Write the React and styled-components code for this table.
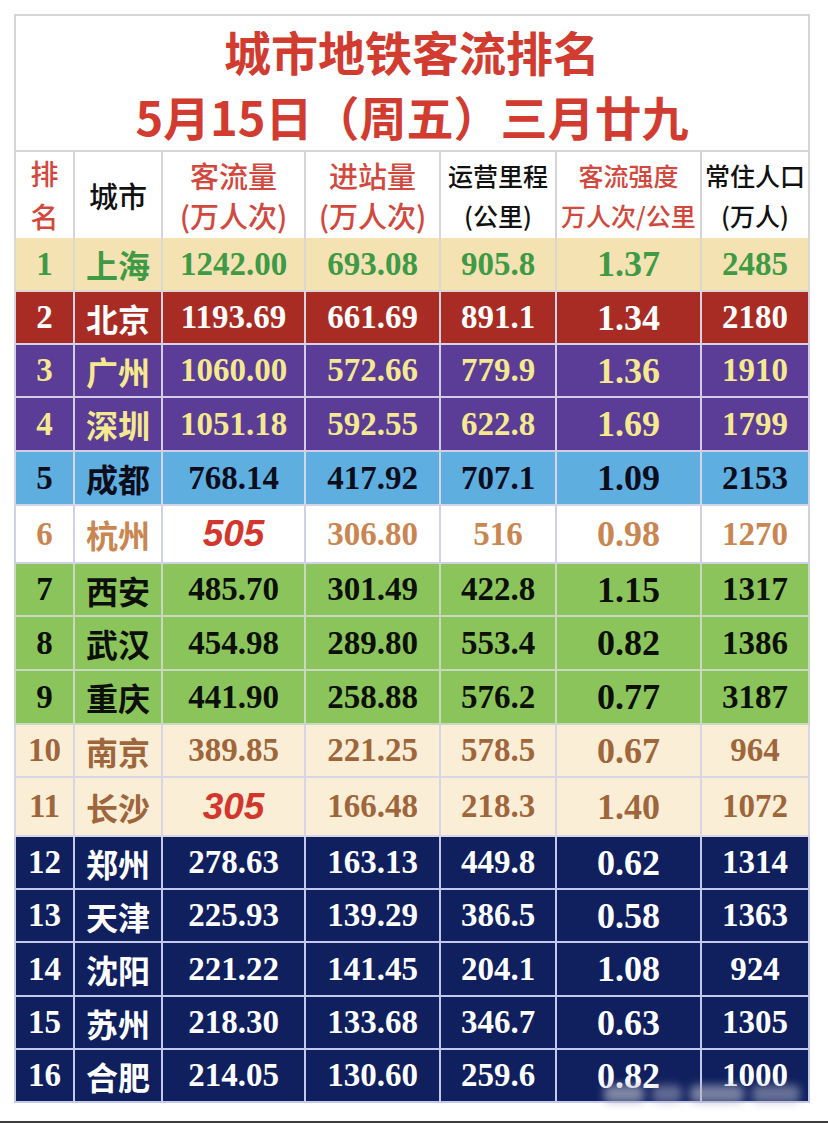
import styled, { createGlobalStyle } from "styled-components";

const GlobalStyle = createGlobalStyle`
  html, body {
    margin: 0;
    padding: 0;
    background: #ffffff;
  }
  body {
    width: 828px;
    height: 1123px;
    overflow: hidden;
    font-family: "Noto Sans CJK SC", "Liberation Sans", sans-serif;
  }
`;

const COLS = "57px 86px 141px 133px 114px 143px 106px";

// 每组行的配色
const themes = {
  gold: { bg: "#f5e2b3", fg: "#3f9a46", line: "#dcd8d0" },
  red: { bg: "#a82c23", fg: "#ffffff", line: "#d9d2e6" },
  purple: { bg: "#5b3c97", fg: "#f5e98f", line: "#d3cde8" },
  blue: { bg: "#5eaee0", fg: "#0a0d1c", line: "#d3d6ea" },
  white: { bg: "#ffffff", fg: "#c98651", line: "#cfd1e4" },
  green: { bg: "#8bc45b", fg: "#0c1009", line: "#c9d9c0" },
  cream: { bg: "#fbeed7", fg: "#9f663b", line: "#d8d6e4" },
  navy: { bg: "#10205f", fg: "#ffffff", line: "#c4c8ea" },
};

const rows = [
  { t: "gold", h: 54, d: ["1", "上海", "1242.00", "693.08", "905.8", "1.37", "2485"] },
  { t: "red", h: 53, d: ["2", "北京", "1193.69", "661.69", "891.1", "1.34", "2180"] },
  { t: "purple", h: 53, d: ["3", "广州", "1060.00", "572.66", "779.9", "1.36", "1910"] },
  { t: "purple", h: 54, d: ["4", "深圳", "1051.18", "592.55", "622.8", "1.69", "1799"] },
  { t: "blue", h: 54, d: ["5", "成都", "768.14", "417.92", "707.1", "1.09", "2153"] },
  { t: "white", h: 58, d: ["6", "杭州", "505", "306.80", "516", "0.98", "1270"], accent: true },
  { t: "green", h: 53, d: ["7", "西安", "485.70", "301.49", "422.8", "1.15", "1317"] },
  { t: "green", h: 54, d: ["8", "武汉", "454.98", "289.80", "553.4", "0.82", "1386"] },
  { t: "green", h: 54, d: ["9", "重庆", "441.90", "258.88", "576.2", "0.77", "3187"] },
  { t: "cream", h: 53, d: ["10", "南京", "389.85", "221.25", "578.5", "0.67", "964"] },
  { t: "cream", h: 59, d: ["11", "长沙", "305", "166.48", "218.3", "1.40", "1072"], accent: true },
  { t: "navy", h: 53, d: ["12", "郑州", "278.63", "163.13", "449.8", "0.62", "1314"] },
  { t: "navy", h: 53, d: ["13", "天津", "225.93", "139.29", "386.5", "0.58", "1363"] },
  { t: "navy", h: 54, d: ["14", "沈阳", "221.22", "141.45", "204.1", "1.08", "924"] },
  { t: "navy", h: 53, d: ["15", "苏州", "218.30", "133.68", "346.7", "0.63", "1305"] },
  { t: "navy", h: 53, d: ["16", "合肥", "214.05", "130.60", "259.6", "0.82", "1000"] },
];

const headers = [
  { lines: ["排", "名"], size: 28, red: true, lh: 43 },
  { lines: ["城市"], size: 29 },
  { lines: ["客流量", "(万人次)"], size: 29, red: true, lh: 40 },
  { lines: ["进站量", "(万人次)"], size: 29, red: true, lh: 40 },
  { lines: ["运营里程", "(公里)"], size: 25, lh: 40 },
  { lines: ["客流强度", "万人次/公里"], size: 25, red: true, lh: 40 },
  { lines: ["常住人口", "(万人)"], size: 25, lh: 40 },
];

// 水印的模糊色块
const smudges = [
  { x: 0, w: 40, o: 0.7 },
  { x: 48, w: 30, o: 0.5 },
  { x: 86, w: 54, o: 0.65 },
  { x: 148, w: 48, o: 0.55 },
];

const Page = styled.div`
  display: flex;
  flex-direction: column;
  padding: 14px 0 0 14px;
  height: 1123px;
  box-sizing: border-box;
`;

const Sheet = styled.div`
  position: relative;
  width: 796px;
  display: flex;
  flex-direction: column;
`;

const TitleBox = styled.div`
  height: 138px;
  box-sizing: border-box;
  border: 2px solid #d6d6d6;
  display: flex;
  flex-direction: column;
  align-items: center;
  justify-content: center;
  background: #ffffff;
`;

const TitleLine = styled.div`
  font-family: "Noto Sans CJK SC", sans-serif;
  font-weight: 700;
  font-size: 47px;
  line-height: 65px;
  color: #d23b30;
  white-space: nowrap;
`;

const Row = styled.div`
  display: grid;
  grid-template-columns: ${COLS};
  column-gap: 2px;
  height: ${(p) => p.$h}px;
  box-sizing: border-box;
  background: ${(p) => p.$line};
  border: 2px solid ${(p) => p.$line};
  border-top: none;
`;

const HeadCell = styled.div`
  background: #ffffff;
  display: flex;
  flex-direction: column;
  align-items: center;
  justify-content: center;
  font-family: "Noto Sans CJK SC", sans-serif;
  font-weight: 500;
  font-size: ${(p) => p.$size}px;
  line-height: ${(p) => p.$lh}px;
  color: ${(p) => (p.$red ? "#d2483d" : "#111111")};
  white-space: nowrap;
`;

const Cell = styled.div`
  background: ${(p) => p.$bg};
  color: ${(p) => p.$fg};
  display: flex;
  align-items: center;
  justify-content: center;
  font-family: "Liberation Serif", "Times New Roman", serif;
  font-weight: 700;
  font-size: ${(p) => p.$size || 33}px;
  white-space: nowrap;
`;

const CityCell = styled(Cell)`
  font-family: "Noto Sans CJK SC", sans-serif;
  font-size: 32px;
`;

const Accent = styled.span`
  font-family: "Liberation Sans", Arial, sans-serif;
  font-style: italic;
  font-weight: 700;
  font-size: 37px;
  color: #d3362d;
`;

const Watermark = styled.div`
  position: absolute;
  left: 590px;
  bottom: 0;
  width: 200px;
  height: 24px;
  filter: blur(4px);
`;

const Smudge = styled.div`
  position: absolute;
  bottom: 0;
  height: 18px;
  border-radius: 6px;
  background: rgba(175, 178, 195, ${(p) => p.$o});
`;

const BottomRule = styled.div`
  margin-top: auto;
  margin-left: -14px;
  height: 2px;
  width: 828px;
  background: #3c3c3c;
`;

const App = () => {
  return (
    <>
      <GlobalStyle />
      <Page>
        <Sheet>
          <TitleBox>
            <TitleLine>城市地铁客流排名</TitleLine>
            <TitleLine>5月15日（周五）三月廿九</TitleLine>
          </TitleBox>
          <Row $h={86} $line="#d6d6d6">
            {headers.map((h, i) => (
              <HeadCell key={i} $size={h.size} $red={h.red} $lh={h.lh || 40}>
                {h.lines.map((l) => (
                  <span key={l}>{l}</span>
                ))}
              </HeadCell>
            ))}
          </Row>
          {rows.map((r) => {
            const th = themes[r.t];
            return (
              <Row key={r.d[0]} $h={r.h} $line={th.line}>
                {r.d.map((v, i) =>
                  i === 1 ? (
                    <CityCell key={i} $bg={th.bg} $fg={th.fg}>
                      {v}
                    </CityCell>
                  ) : (
                    <Cell key={i} $bg={th.bg} $fg={th.fg} $size={i === 5 ? 36 : 33}>
                      {i === 2 && r.accent ? <Accent>{v}</Accent> : v}
                    </Cell>
                  )
                )}
              </Row>
            );
          })}
          <Watermark>
            {smudges.map((s) => (
              <Smudge key={s.x} style={{ left: s.x, width: s.w }} $o={s.o} />
            ))}
          </Watermark>
        </Sheet>
        <BottomRule />
      </Page>
    </>
  );
};

export default App;
